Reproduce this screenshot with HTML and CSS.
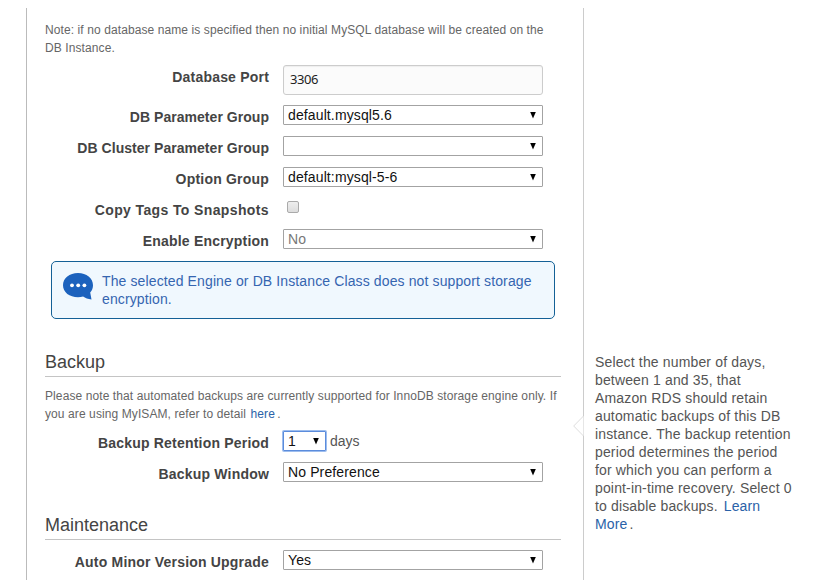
FILE: index.html
```html
<!DOCTYPE html>
<html lang="en">
<head>
<meta charset="utf-8">
<title>Configure Advanced Settings</title>
<link rel="stylesheet" href="styles.css">
</head>
<body>
<main class="page">
  <form class="panel">
    <p class="note">Note: if no database name is specified then no initial MySQL database will be created on the<br>DB Instance.</p>
    <div class="row row-input"><label class="label">Database Port</label><div class="input">3306</div></div>
    <div class="row"><label class="label tight">DB Parameter Group</label><div class="select"><span>default.mysql5.6</span><i class="arrow"></i></div></div>
    <div class="row"><label class="label tight">DB Cluster Parameter Group</label><div class="select"><span></span><i class="arrow"></i></div></div>
    <div class="row"><label class="label">Option Group</label><div class="select"><span>default:mysql-5-6</span><i class="arrow"></i></div></div>
    <div class="row"><label class="label tags">Copy Tags To Snapshots</label><div class="checkbox"></div></div>
    <div class="row"><label class="label">Enable Encryption</label><div class="select disabled"><span>No</span><i class="arrow"></i></div></div>
    <div class="alert">
      <svg class="bubble" width="30" height="28" viewBox="0 0 30 28">
        <path fill="#1c62bd" d="M15 0C6.500 0 0 5.200 0 12.200S6.500 24.200 15 24.200c1.800 0 3.500-.2 5.100-.7 2.200 1.500 4.900 2.600 8.400 3.100l-1.300-7.100c1.800-2 2.800-4.500 2.800-7.300C30 5.200 23.500 0 15 0z"/>
        <g fill="#fff"><circle cx="9" cy="12.300" r="1.900"/><circle cx="15.200" cy="12.300" r="1.900"/><circle cx="21.400" cy="12.300" r="1.900"/></g>
      </svg>
      <p class="alert-text">The selected Engine or DB Instance Class does not support storage<br>encryption.</p>
    </div>
    <h2 class="heading heading-backup">Backup</h2>
    <p class="note note-backup">Please note that automated backups are currently supported for InnoDB storage engine only. If<br>you are using MyISAM, refer to detail <a class="link here">here</a>.</p>
    <div class="row"><label class="label">Backup Retention Period</label><div class="period"><div class="select focused"><span>1</span><i class="arrow"></i></div><span class="days">days</span></div></div>
    <div class="row"><label class="label">Backup Window</label><div class="select"><span>No Preference</span><i class="arrow"></i></div></div>
    <h2 class="heading heading-maintenance">Maintenance</h2>
    <div class="row row-upgrade"><label class="label">Auto Minor Version Upgrade</label><div class="select"><span>Yes</span><i class="arrow"></i></div></div>
  </form>
  <aside class="help">
    <svg class="pointer" width="11" height="20" viewBox="0 0 11 20"><path d="M10.500 0L.7 10l9.800 10" fill="#fff" stroke="#ddd"/></svg>
    <p class="help-text">Select the number of days,<br>between 1 and 35, that<br>Amazon RDS should retain<br>automatic backups of this DB<br>instance. The backup retention<br>period determines the period<br>for which you can perform a<br>point-in-time recovery. Select 0<br>to disable backups. <a class="link learn">Learn<br>More</a>.</p>
  </aside>
</main>
</body>
</html>
```
FILE: styles.css
```css
* { box-sizing: border-box; }
body {
  margin: 0;
  background: #fff;
  color: #444;
  font: 14px/18px "Liberation Sans", Arial, sans-serif;
}
p, h2 { margin: 0; }
.page {
  display: flex;
  height: 587px;
  padding: 8px 0 7px 26px;
  white-space: nowrap;
  overflow: hidden;
}
.panel {
  width: 558px;
  padding: 13px 22px 0 18px;
  border-left: 1px solid #bbb;
  border-right: 1px solid #ccc;
}
.note { color: #666; font-size: 12px; letter-spacing: 0.095px; }
.note-backup { margin: 10px 0 8px; }
.link { color: #2a62a8; margin-right: 2px; }
.here { margin-left: 1px; letter-spacing: 0.2px; }
.row {
  display: grid;
  grid-template-columns: 224px 260px;
  column-gap: 14px;
  align-items: start;
  height: 31px;
}
.row-input { height: 40px; margin-top: 8px; }
.row-upgrade { margin-top: 10px; }
.label {
  margin-top: 3px;
  font-weight: bold;
  text-align: right;
  letter-spacing: 0.2px;
}
.tight { letter-spacing: 0.04px; }
.tags { letter-spacing: 0.38px; }
.input {
  height: 30px;
  padding: 0 6px;
  border: 1px solid #ccc;
  border-radius: 3px;
  background: #fbfbfb;
  box-shadow: inset 0 1px 1px #eee;
  color: #222;
  font: 13px/27px "Noto Sans", sans-serif;
  letter-spacing: -0.4px;
}
.select {
  display: flex;
  justify-content: space-between;
  align-items: center;
  height: 20px;
  padding: 0 6px 0 4px;
  border: 1px solid #a3a3a3;
  border-radius: 1px;
  background: #fff;
  color: #111;
  letter-spacing: 0.12px;
}
.disabled { color: #777; }
.arrow {
  width: 6px;
  height: 7px;
  background: #000;
  clip-path: polygon(0 0, 100% 0, 50% 100%);
}
.checkbox {
  width: 12px;
  height: 12px;
  margin: 3px 0 0 4px;
  border: 1px solid #aaa;
  border-radius: 2px;
  background: linear-gradient(#eee, #ddd);
}
.period { display: flex; align-items: center; gap: 4px; }
.focused { width: 43px; border-color: #5b8cdc; box-shadow: 0 0 0 1px #9dbdee; }
.days { color: #555; }
.alert {
  display: flex;
  gap: 9px;
  width: 504px;
  height: 58px;
  margin: 1px 0 0 6px;
  padding: 10px 11px;
  border: 1px solid #146196;
  border-radius: 5px;
  background: #f0f8fe;
  color: #3565b0;
  letter-spacing: 0.12px;
}
.bubble { margin-top: 1px; flex: none; }
.heading {
  height: 26px;
  border-bottom: 1px solid #c4c4c4;
  font-size: 18px;
  font-weight: normal;
  line-height: 22px;
}
.heading-backup { margin-top: 32px; }
.heading-maintenance { margin-top: 21px; }
.help { position: relative; padding: 345px 0 0 11px; }
.pointer { position: absolute; left: -11px; top: 408px; }
.help-text { letter-spacing: 0.15px; color: #555; }
.learn { margin-left: 2px; }
```
